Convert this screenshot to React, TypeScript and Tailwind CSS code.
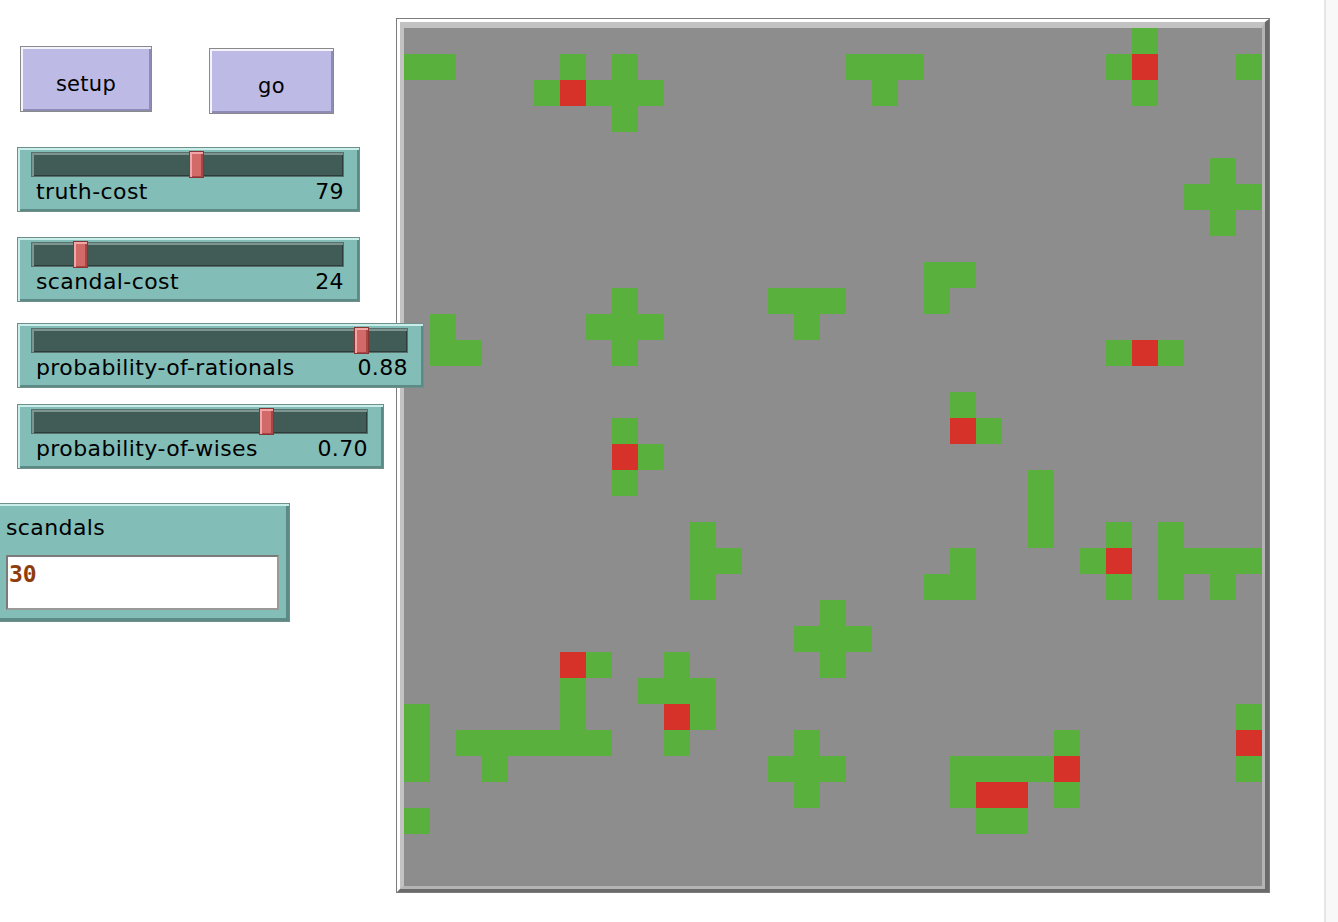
import React from 'react';

type Cell = 'g' | 'r';

// [row, fromCol, toCol, colour] – world is 33 x 33 patches
const patches: [number, number, number, Cell][] = [
  [0, 28, 28, 'g'],
  [1, 0, 1, 'g'], [1, 6, 6, 'g'], [1, 8, 8, 'g'], [1, 17, 19, 'g'], [1, 27, 27, 'g'], [1, 28, 28, 'r'], [1, 32, 32, 'g'],
  [2, 5, 5, 'g'], [2, 6, 6, 'r'], [2, 7, 9, 'g'], [2, 18, 18, 'g'], [2, 28, 28, 'g'],
  [3, 8, 8, 'g'],
  [5, 31, 31, 'g'],
  [6, 30, 32, 'g'],
  [7, 31, 31, 'g'],
  [9, 20, 21, 'g'],
  [10, 8, 8, 'g'], [10, 14, 16, 'g'], [10, 20, 20, 'g'],
  [11, 1, 1, 'g'], [11, 7, 9, 'g'], [11, 15, 15, 'g'],
  [12, 1, 2, 'g'], [12, 8, 8, 'g'], [12, 27, 27, 'g'], [12, 28, 28, 'r'], [12, 29, 29, 'g'],
  [14, 21, 21, 'g'],
  [15, 8, 8, 'g'], [15, 21, 21, 'r'], [15, 22, 22, 'g'],
  [16, 8, 8, 'r'], [16, 9, 9, 'g'],
  [17, 8, 8, 'g'], [17, 24, 24, 'g'],
  [18, 24, 24, 'g'],
  [19, 11, 11, 'g'], [19, 24, 24, 'g'], [19, 27, 27, 'g'], [19, 29, 29, 'g'],
  [20, 11, 12, 'g'], [20, 21, 21, 'g'], [20, 26, 26, 'g'], [20, 27, 27, 'r'], [20, 29, 32, 'g'],
  [21, 11, 11, 'g'], [21, 20, 21, 'g'], [21, 27, 27, 'g'], [21, 29, 29, 'g'], [21, 31, 31, 'g'],
  [22, 16, 16, 'g'],
  [23, 15, 17, 'g'],
  [24, 6, 6, 'r'], [24, 7, 7, 'g'], [24, 10, 10, 'g'], [24, 16, 16, 'g'],
  [25, 6, 6, 'g'], [25, 9, 11, 'g'],
  [26, 0, 0, 'g'], [26, 6, 6, 'g'], [26, 10, 10, 'r'], [26, 11, 11, 'g'], [26, 32, 32, 'g'],
  [27, 0, 0, 'g'], [27, 2, 7, 'g'], [27, 10, 10, 'g'], [27, 15, 15, 'g'], [27, 25, 25, 'g'], [27, 32, 32, 'r'],
  [28, 0, 0, 'g'], [28, 3, 3, 'g'], [28, 14, 16, 'g'], [28, 21, 24, 'g'], [28, 25, 25, 'r'], [28, 32, 32, 'g'],
  [29, 15, 15, 'g'], [29, 21, 21, 'g'], [29, 22, 23, 'r'], [29, 25, 25, 'g'],
  [30, 0, 0, 'g'], [30, 22, 23, 'g'],
];

const SIZE = 33;

function buildWorld(): (Cell | null)[] {
  const cells: (Cell | null)[] = new Array(SIZE * SIZE).fill(null);
  for (const [row, from, to, c] of patches) {
    for (let col = from; col <= to; col++) cells[row * SIZE + col] = c;
  }
  return cells;
}

const world = buildWorld();

const font = { fontFamily: '"DejaVu Sans", Verdana, sans-serif' };

interface ButtonProps {
  label: string;
  className: string;
}

const NLButton: React.FC<ButtonProps> = ({ label, className }) => (
  <div
    className={`shrink-0 h-[66px] flex justify-center bg-[#bdbbe6] border border-[#8a8a8a] shadow-[inset_2px_2px_0_#f4f4ff,inset_-2px_-2px_0_#8e8cb4] text-[21px] leading-[24px] text-black tracking-[0.3px] ${className}`}
    style={font}
  >
    {label}
  </div>
);

interface SliderProps {
  label: string;
  value: string;
  thumb: number;
  className: string;
}

const NLSlider: React.FC<SliderProps> = ({ label, value, thumb, className }) => (
  <div
    className={`ml-[17px] shrink-0 h-[65px] flex flex-col bg-[#83bdb7] border border-[#6f8f8b] shadow-[inset_2px_2px_0_#c9ede8,inset_-2px_-2px_0_#5d8a85] pl-[13px] pr-[15px] pt-[4px] ${className}`}
    style={font}
  >
    <div className="relative h-[25px] bg-[#415b57] border border-[#5a6e6b] shadow-[inset_2px_2px_0_#7d9591,inset_-1px_-1px_0_#2b3d3a]">
      <div
        className="absolute top-[-2px] w-[15px] h-[27px] bg-[#d26a6a] border border-[#8a3434] shadow-[inset_2px_2px_0_#f2a7a7,inset_-2px_-1px_0_#a84646]"
        style={{ left: thumb }}
      />
    </div>
    <div className="mt-[3px] flex justify-between pl-[5px] text-[22px] leading-[24px] text-black tracking-[0.4px]">
      <span>{label}</span>
      <span>{value}</span>
    </div>
  </div>
);

export default function App() {
  return (
    <div className="w-[1338px] h-[922px] bg-white flex overflow-hidden">
      {/* widgets column */}
      <div className="relative z-10 w-[396px] shrink-0 flex flex-col pt-[46px]">
        <div className="flex items-start pl-[20px] gap-[57px]">
          <NLButton label="setup" className="w-[132px] pt-[25px]" />
          <NLButton label="go" className="w-[125px] mt-[2px] pt-[25px]" />
        </div>

        <NLSlider label="truth-cost" value="79" thumb={157} className="mt-[33px] w-[343px]" />
        <NLSlider label="scandal-cost" value="24" thumb={41} className="mt-[25px] w-[343px]" />
        <NLSlider label="probability-of-rationals" value="0.88" thumb={322} className="mt-[21px] w-[407px]" />
        <NLSlider label="probability-of-wises" value="0.70" thumb={227} className="mt-[16px] w-[367px]" />

        {/* monitor */}
        <div
          className="ml-[-3px] mt-[34px] w-[293px] h-[119px] flex flex-col bg-[#83bdb7] border border-[#6f8f8b] shadow-[inset_2px_2px_0_#c9ede8,inset_-3px_-3px_0_#5d8a85] pl-[8px] pr-[10px] pt-[12px]"
          style={font}
        >
          <div className="text-[22px] leading-[24px] text-black tracking-[0.4px]">scandals</div>
          <div className="mt-[15px] h-[55px] bg-white border-2 border-t-[#7a7a7a] border-l-[#7a7a7a] border-r-[#9a9a9a] border-b-[#9a9a9a] pl-[1px] pt-[5px]">
            <span
              className="text-[23px] leading-[24px] text-[#8f3c0c] font-semibold"
              style={{ fontFamily: '"DejaVu Sans Mono", "Liberation Mono", monospace' }}
            >
              30
            </span>
          </div>
        </div>
      </div>

      {/* world view */}
      <div className="mt-[18px] self-start shrink-0 border border-[#7c7c7c]">
        <div className="border-t-[3px] border-l-[3px] border-r-[4px] border-b-[3px] border-t-white border-l-white border-r-[#6a6a6a] border-b-[#6a6a6a]">
          <div className="border-t-[6px] border-l-[4px] border-r-[3px] border-b-[3px] border-t-[#c2c2c2] border-l-[#c2c2c2] border-r-[#b4b4b4] border-b-[#b4b4b4]">
            <div className="grid grid-cols-[repeat(33,26px)] grid-rows-[repeat(33,26px)] bg-[#8d8d8d]">
              {world.map((c, i) => (
                <div
                  key={i}
                  className={c === 'g' ? 'bg-[#59b03c]' : c === 'r' ? 'bg-[#d73229]' : ''}
                />
              ))}
            </div>
          </div>
        </div>
      </div>

      <div className="flex-1" />
      <div className="w-[14px] h-full border-l-2 border-[#e6e6e6] bg-[#f8f8f8]" />
    </div>
  );
}
